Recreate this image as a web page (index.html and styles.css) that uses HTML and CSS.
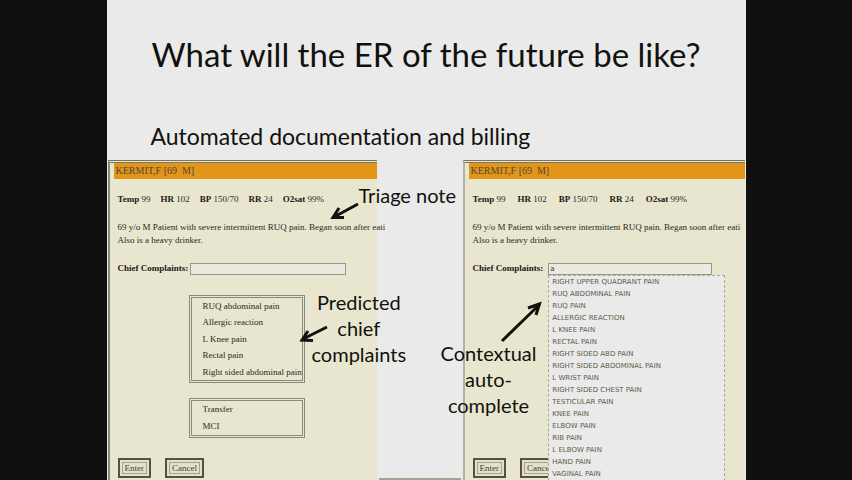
FILE: index.html
```html
<!DOCTYPE html>
<html lang="en">
<head>
<meta charset="utf-8">
<title>What will the ER of the future be like?</title>
<link rel="stylesheet" href="styles.css">
</head>
<body>
<main class="slide">
  <h1 class="title">What will the ER of the future be like?</h1>
  <h2 class="subtitle">Automated documentation and billing</h2>
  <div class="panels">
    <section class="panel">
      <header class="patient">KERMIT,F [69 &nbsp;M]</header>
      <div class="content">
        <p class="vitals"><span><b>Temp</b> 99</span><span><b>HR</b> 102</span><span><b>BP</b> 150/70</span><span><b>RR</b> 24</span><span><b>O2sat</b> 99%</span></p>
        <p class="note">69 y/o M Patient with severe intermittent RUQ pain. Began soon after eati<br>Also is a heavy drinker.</p>
        <div class="field">
          <label for="cc1">Chief Complaints:</label>
          <div class="combo"><input id="cc1" type="text"></div>
        </div>
        <ul class="choices">
          <li>RUQ abdominal pain</li>
          <li>Allergic reaction</li>
          <li>L Knee pain</li>
          <li>Rectal pain</li>
          <li>Right sided abdominal pain</li>
        </ul>
        <ul class="choices short">
          <li>Transfer</li>
          <li>MCI</li>
        </ul>
        <div class="actions"><button type="button">Enter</button><button type="button">Cancel</button></div>
      </div>
    </section>
    <div class="gutter"></div>
    <section class="panel wide">
      <header class="patient">KERMIT,F [69 &nbsp;M]</header>
      <div class="content">
        <p class="vitals"><span><b>Temp</b> 99</span><span><b>HR</b> 102</span><span><b>BP</b> 150/70</span><span><b>RR</b> 24</span><span><b>O2sat</b> 99%</span></p>
        <p class="note">69 y/o M Patient with severe intermittent RUQ pain. Began soon after eati<br>Also is a heavy drinker.</p>
        <div class="field">
          <label for="cc2">Chief Complaints:</label>
          <div class="combo">
            <input id="cc2" type="text" value="a">
            <ul class="menu">
              <li>RIGHT UPPER QUADRANT PAIN</li>
              <li>RUQ ABDOMINAL PAIN</li>
              <li>RUQ PAIN</li>
              <li>ALLERGIC REACTION</li>
              <li>L KNEE PAIN</li>
              <li>RECTAL PAIN</li>
              <li>RIGHT SIDED ABD PAIN</li>
              <li>RIGHT SIDED ABDOMINAL PAIN</li>
              <li>L WRIST PAIN</li>
              <li>RIGHT SIDED CHEST PAIN</li>
              <li>TESTICULAR PAIN</li>
              <li>KNEE PAIN</li>
              <li>ELBOW PAIN</li>
              <li>RIB PAIN</li>
              <li>L ELBOW PAIN</li>
              <li>HAND PAIN</li>
              <li>VAGINAL PAIN</li>
            </ul>
          </div>
        </div>
        <div class="actions"><button type="button">Enter</button><button type="button">Cancel</button></div>
      </div>
    </section>
    <p class="callout triage">Triage note</p>
    <p class="callout predicted">Predicted<br>chief<br>complaints</p>
    <p class="callout contextual">Contextual<br>auto-<br>complete</p>
    <svg class="arrow a1" width="30" height="20" viewBox="0 0 30 20"><path d="M28 3L4 16M9 7L3 16.500L14 16.500"/></svg>
    <svg class="arrow a2" width="30" height="20" viewBox="0 0 30 20"><path d="M28 3L4 15M9 7L3 16L14 16.500"/></svg>
    <svg class="arrow a3" width="42" height="42" viewBox="0 0 42 42"><path d="M2 40L39 4M28 7L39.500 3L36 14"/></svg>
  </div>
</main>
</body>
</html>
```
FILE: styles.css
```css
* { box-sizing: border-box; margin: 0; padding: 0; }
body {
  display: grid;
  grid-template-columns: 1fr 6fr 1fr;
  height: 100vh;
  overflow: hidden;
  background: #10100e;
  color: #11110d;
}
.slide {
  grid-column: 2;
  display: flex;
  flex-direction: column;
  min-height: 100vh;
  overflow: hidden;
  padding: 0 1px;
  background: #eaeaea;
  font-family: Lato, "Open Sans", sans-serif;
  font-variant-ligatures: none;
}
.title {
  margin-top: 32px;
  font-size: 33px;
  line-height: 44px;
  font-weight: 400;
  text-align: center;
  white-space: nowrap;
}
.subtitle {
  margin: 44px 0 8px 43px;
  font-size: 23px;
  line-height: 32px;
  font-weight: 400;
  white-space: nowrap;
}
.panels {
  position: relative;
  flex: 1;
  display: grid;
  grid-template-columns: 269fr 86fr 282fr;
}
.panel {
  min-width: 0;
  padding-left: 4px;
  border-top: 3px double #77756a;
  border-left: 2px solid #8b897e;
  background: #e8e6cf;
  font: 9px/13px "Liberation Serif", serif;
  color: #2a2922;
}
.wide { border-left-color: #b5b2a4; }
.gutter {
  align-self: end;
  height: 2px;
  margin: 0 2px;
  background: #a5a296;
}
.patient {
  height: 16px;
  padding-left: 2px;
  background: #e39518;
  font-size: 10px;
  line-height: 16px;
  color: #4c4938;
}
.content { padding-left: 4px; }
.vitals {
  display: flex;
  gap: 10px;
  margin-top: 14px;
  white-space: nowrap;
}
.wide .vitals { gap: 12px; }
.vitals b, .field label { color: #1b1a15; }
.note {
  margin-top: 15px;
  white-space: nowrap;
}
.field {
  display: flex;
  align-items: center;
  gap: 2px;
  height: 13px;
  margin-top: 15px;
}
.wide .field { gap: 5px; }
.field label { font-weight: 700; white-space: nowrap; }
.combo { position: relative; width: 156px; }
.wide .combo { width: 164px; }
.combo input {
  display: block;
  width: 100%;
  height: 12px;
  padding: 0 1px;
  border: 1px solid #99968a;
  border-radius: 0;
  background: #ebeae0;
  font: 7px/10px "DejaVu Sans", sans-serif;
  color: #33322a;
}
.menu {
  position: absolute;
  top: 12px;
  left: 0;
  width: 177px;
  padding: 0 3px;
  border: 1px dashed #aaa796;
  background: #eaeaea;
  list-style: none;
  font: 7px/12px "DejaVu Sans", sans-serif;
  color: #5f5b48;
  white-space: nowrap;
}
.choices {
  display: grid;
  width: 116px;
  height: 88px;
  margin: 20px 0 0 71px;
  padding-left: 11px;
  border: 3px double #8b897e;
  list-style: none;
  line-height: 16px;
  white-space: nowrap;
}
.short { height: 40px; margin-top: 15px; }
.actions { display: flex; gap: 14px; margin-top: 20px; }
.wide .actions { margin-top: 183px; }
.actions button {
  height: 20px;
  padding: 0 5px;
  border: 2px solid #55523f;
  outline: 1px solid #a5a28e;
  outline-offset: -5px;
  background: #e3e1cb;
  font: 9px/14px "Liberation Serif", serif;
  color: #44412f;
}
.callout {
  position: absolute;
  font-size: 20px;
  line-height: 26px;
  text-align: center;
  white-space: nowrap;
}
.triage { left: 251px; top: 22px; }
.predicted { left: 204px; top: 129px; }
.contextual { left: 333px; top: 180px; }
.arrow {
  position: absolute;
  fill: none;
  stroke: #11110d;
  stroke-width: 3;
}
.a1 { left: 222px; top: 41px; }
.a2 { left: 191px; top: 164px; }
.a3 { left: 392px; top: 141px; }
```
